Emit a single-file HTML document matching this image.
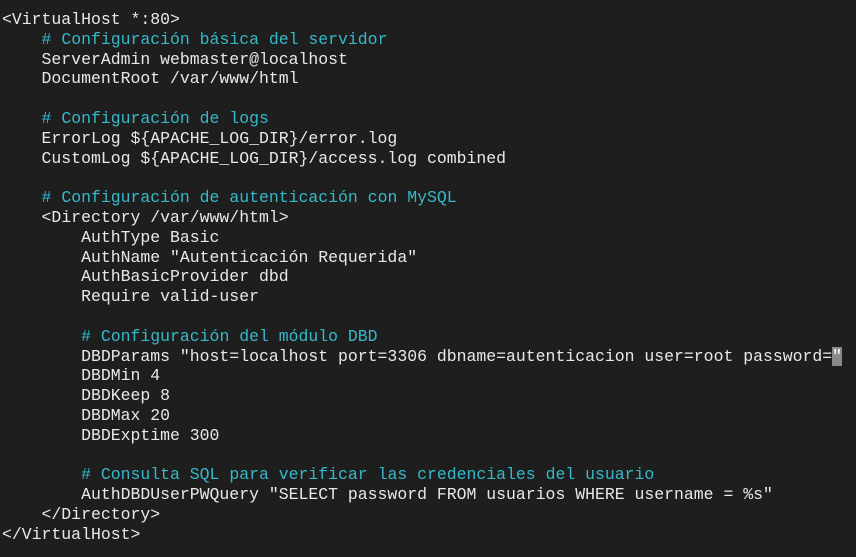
<!DOCTYPE html>
<html><head><meta charset="utf-8"><style>
html,body{margin:0;padding:0;background:#1e1e1e;width:856px;height:557px;overflow:hidden}
pre{margin:0;position:absolute;left:2px;top:10px;font-family:"Liberation Mono",monospace;font-size:16.48px;line-height:19.8px;color:#e8e8e8}
.c{color:#35b9c9}
.cur{background:#8a8a8a;color:#fff}
</style></head><body><pre>&lt;VirtualHost *:80&gt;
    <span class="c"># Configuración básica del servidor</span>
    ServerAdmin webmaster@localhost
    DocumentRoot /var/www/html

    <span class="c"># Configuración de logs</span>
    ErrorLog ${APACHE_LOG_DIR}/error.log
    CustomLog ${APACHE_LOG_DIR}/access.log combined

    <span class="c"># Configuración de autenticación con MySQL</span>
    &lt;Directory /var/www/html&gt;
        AuthType Basic
        AuthName "Autenticación Requerida"
        AuthBasicProvider dbd
        Require valid-user

        <span class="c"># Configuración del módulo DBD</span>
        DBDParams "host=localhost port=3306 dbname=autenticacion user=root password=<span class="cur">"</span>
        DBDMin 4
        DBDKeep 8
        DBDMax 20
        DBDExptime 300

        <span class="c"># Consulta SQL para verificar las credenciales del usuario</span>
        AuthDBDUserPWQuery "SELECT password FROM usuarios WHERE username = %s"
    &lt;/Directory&gt;
&lt;/VirtualHost&gt;</pre></body></html>
